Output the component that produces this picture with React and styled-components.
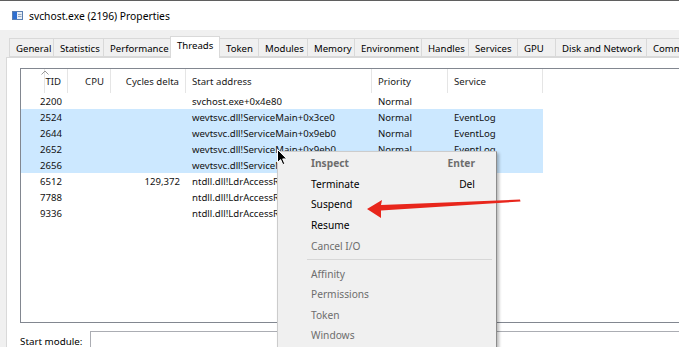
import React from "react";
import styled, { createGlobalStyle } from "styled-components";

const Global = createGlobalStyle`
  html, body {
    margin: 0;
    padding: 0;
    overflow: hidden;
    background: #f0f0f0;
  }
  body {
    font-family: "Noto Sans", "Open Sans", sans-serif;
    color: #000;
  }
`;

const Window = styled.div`
  position: relative;
  width: 679px;
  height: 347px;
  display: flex;
  flex-direction: column;
  overflow: hidden;
  border-top: 1px solid #5f5f5f;
  box-sizing: border-box;
`;

const TitleBar = styled.div`
  height: 29px;
  flex: none;
  background: #fff;
  display: flex;
  align-items: center;
  padding-left: 12px;
  gap: 6px;
  font-size: 10.3px;
`;

const Body = styled.div`
  flex: 1;
  display: flex;
  flex-direction: column;
  padding: 6px 0 0 6px;
  min-height: 0;
`;

const TabStrip = styled.div`
  display: flex;
  align-items: flex-end;
  height: 21px;
  padding-left: 4px;
  position: relative;
  z-index: 1;
`;

const Tab = styled.div`
  flex: none;
  box-sizing: border-box;
  width: ${(p) => p.$w}px;
  height: ${(p) => (p.$active ? 22 : 19)}px;
  margin-bottom: ${(p) => (p.$active ? -1 : 0)}px;
  padding-left: 6px;
  padding-top: ${(p) => (p.$active ? 1 : 2)}px;
  font-size: 9.6px;
  line-height: 15px;
  white-space: nowrap;
  background: ${(p) => (p.$active ? "#fff" : "#f0f0f0")};
  border: 1px solid #d9d9d9;
  border-bottom: ${(p) => (p.$active ? "none" : "1px solid #d9d9d9")};
  margin-left: -1px;
`;

const Panel = styled.div`
  flex: 1;
  background: #fff;
  border-left: 1px solid #d9d9d9;
  border-top: 1px solid #d9d9d9;
  padding: 10px 0 0 13px;
  display: flex;
  flex-direction: column;
  gap: 8px;
  min-height: 0;
`;

const ListView = styled.div`
  height: 255px;
  flex: none;
  box-sizing: border-box;
  border: 1px solid #828790;
  border-right: none;
  background: #fff;
  font-size: 9.6px;
`;

const Grid = styled.div`
  display: grid;
  grid-template-columns: 24px 23px 43px 75px 186px 76px 95px 1fr;
  height: ${(p) => p.$h}px;
`;

const HeadCell = styled.div`
  position: relative;
  display: flex;
  align-items: center;
  justify-content: ${(p) => (p.$right ? "flex-end" : "flex-start")};
  padding: ${(p) => (p.$right ? "0 6px 0 0" : "0 0 0 6px")};
  border-right: 1px solid #e5e5e5;
  color: #1a1a1a;
  white-space: nowrap;
`;

const Cell = styled.div`
  display: flex;
  align-items: center;
  justify-content: ${(p) => (p.$right ? "flex-end" : "flex-start")};
  padding: ${(p) => (p.$right ? "0 6px 0 0" : "0 0 0 6px")};
  background: ${(p) => (p.$sel ? "#cce8ff" : "transparent")};
  white-space: nowrap;
  overflow: visible;
  color: #111;
`;

const SortCaret = styled.svg`
  position: absolute;
  left: -4px;
  top: 1px;
`;

const ModuleRow = styled.div`
  display: flex;
  align-items: flex-start;
  gap: 8px;
  font-size: 9.8px;
`;

const Label = styled.span`
  padding-top: 4px;
`;

const TextBox = styled.div`
  flex: 1;
  height: 20px;
  border: 1px solid #abadb3;
  border-right: none;
  background: #fff;
`;

const Menu = styled.div`
  position: absolute;
  left: 277px;
  top: 150px;
  width: 220px;
  box-sizing: border-box;
  padding: 1px 0;
  background: #f0f0f0;
  border: 1px solid #cccccc;
  border-right-color: #8c8c8c;
  box-shadow: 2px 2px 3px rgba(0, 0, 0, 0.28);
  font-size: 10.2px;
  z-index: 5;
`;

const MenuItem = styled.div`
  height: 20.6px;
  display: flex;
  align-items: center;
  justify-content: space-between;
  padding: 0 21px 0 33px;
  color: ${(p) => (p.$disabled ? "#6d6d6d" : "#000")};
  font-weight: ${(p) => (p.$bold ? 700 : 400)};
`;

const Separator = styled.div`
  height: 1px;
  background: #d7d7d7;
  margin: 3px 4px 3.4px 29px;
`;

const Overlay = styled.svg`
  position: absolute;
  left: ${(p) => p.$x}px;
  top: ${(p) => p.$y}px;
  z-index: 6;
  overflow: visible;
`;

const tabs = [
  ["General", 45],
  ["Statistics", 51],
  ["Performance", 68],
  ["Threads", 50],
  ["Token", 40],
  ["Modules", 50],
  ["Memory", 48],
  ["Environment", 68],
  ["Handles", 48],
  ["Services", 50],
  ["GPU", 39],
  ["Disk and Network", 92],
  ["Comm", 60],
];

const rows = [
  ["2200", "", "svchost.exe+0x4e80", "Normal", "", false],
  ["2524", "", "wevtsvc.dll!ServiceMain+0x3ce0", "Normal", "EventLog", true],
  ["2644", "", "wevtsvc.dll!ServiceMain+0x9eb0", "Normal", "EventLog", true],
  ["2652", "", "wevtsvc.dll!ServiceMain+0x9eb0", "Normal", "EventLog", true],
  ["2656", "", "wevtsvc.dll!ServiceMain+0x9eb0", "Normal", "EventLog", true],
  ["6512", "129,372", "ntdll.dll!LdrAccessResource+0x1a0", "Normal", "", false],
  ["7788", "", "ntdll.dll!LdrAccessResource+0x1a0", "Normal", "", false],
  ["9336", "", "ntdll.dll!LdrAccessResource+0x1a0", "Normal", "", false],
];

const menu = [
  { label: "Inspect", key: "Enter", disabled: true, bold: true },
  { label: "Terminate", key: "Del" },
  { label: "Suspend" },
  { label: "Resume" },
  { label: "Cancel I/O", disabled: true },
  { sep: true },
  { label: "Affinity", disabled: true },
  { label: "Permissions", disabled: true },
  { label: "Token", disabled: true },
  { label: "Windows", disabled: true },
  { label: "Stack", disabled: true },
];

const AppIcon = () => (
  <svg width="11" height="9" viewBox="0 0 11 9">
    <rect x="0.5" y="0.5" width="10" height="8" fill="#e8eef6" stroke="#5b7fb0" />
    <rect x="1" y="1" width="4" height="7" fill="#2f6fd0" />
    <rect x="6" y="3" width="3.5" height="1" fill="#9aa8b8" />
    <rect x="6" y="5" width="3.5" height="1" fill="#9aa8b8" />
  </svg>
);

export default function App() {
  return (
    <Window>
      <Global />
      <TitleBar>
        <AppIcon />
        <span>svchost.exe (2196) Properties</span>
      </TitleBar>
      <Body>
        <TabStrip>
          {tabs.map(([t, w]) => (
            <Tab key={t} $w={w} $active={t === "Threads"}>
              {t}
            </Tab>
          ))}
        </TabStrip>
        <Panel>
          <ListView>
            <Grid $h={24}>
              <HeadCell />
              <HeadCell $right>
                <SortCaret width="8" height="5" viewBox="0 0 8 5">
                  <path d="M0.5 4.5 L4 1 L7.5 4.5" fill="none" stroke="#9a9a9a" />
                </SortCaret>
                TID
              </HeadCell>
              <HeadCell $right>CPU</HeadCell>
              <HeadCell $right>Cycles delta</HeadCell>
              <HeadCell>Start address</HeadCell>
              <HeadCell>Priority</HeadCell>
              <HeadCell>Service</HeadCell>
              <HeadCell style={{ borderRight: "none" }} />
            </Grid>
            {rows.map(([tid, cyc, addr, pri, svc, sel]) => (
              <Grid key={tid} $h={16}>
                <Cell $sel={sel} />
                <Cell $sel={sel} $right style={{ marginLeft: -24, paddingLeft: 0 }}>
                  {tid}
                </Cell>
                <Cell $sel={sel} $right />
                <Cell $sel={sel} $right>{cyc}</Cell>
                <Cell $sel={sel}>{addr}</Cell>
                <Cell $sel={sel}>{pri}</Cell>
                <Cell $sel={sel}>{svc}</Cell>
                <Cell />
              </Grid>
            ))}
          </ListView>
          <ModuleRow>
            <Label>Start module:</Label>
            <TextBox />
          </ModuleRow>
        </Panel>
      </Body>

      <Menu>
        {menu.map((m, i) =>
          m.sep ? (
            <Separator key={i} />
          ) : (
            <MenuItem key={m.label} $disabled={m.disabled} $bold={m.bold}>
              <span>{m.label}</span>
              {m.key && <span>{m.key}</span>}
            </MenuItem>
          )
        )}
      </Menu>

      <Overlay $x={277} $y={148} width="11" height="17" viewBox="0 0 11 17">
        <path
          d="M0.5 0.5 L0.5 13.5 L3.6 10.6 L5.8 15.6 L7.8 14.8 L5.7 9.9 L9.8 9.9 Z"
          fill="#000"
          stroke="#fff"
          strokeWidth="1"
          strokeLinejoin="round"
        />
      </Overlay>

      <Overlay $x={360} $y={189} width="165" height="32" viewBox="0 0 165 32">
        <polygon
          points="7,19 22,10 21,15 160,9.5 160.5,11.5 21,20.5 21,28"
          fill="#e8261c"
        />
      </Overlay>
    </Window>
  );
}
